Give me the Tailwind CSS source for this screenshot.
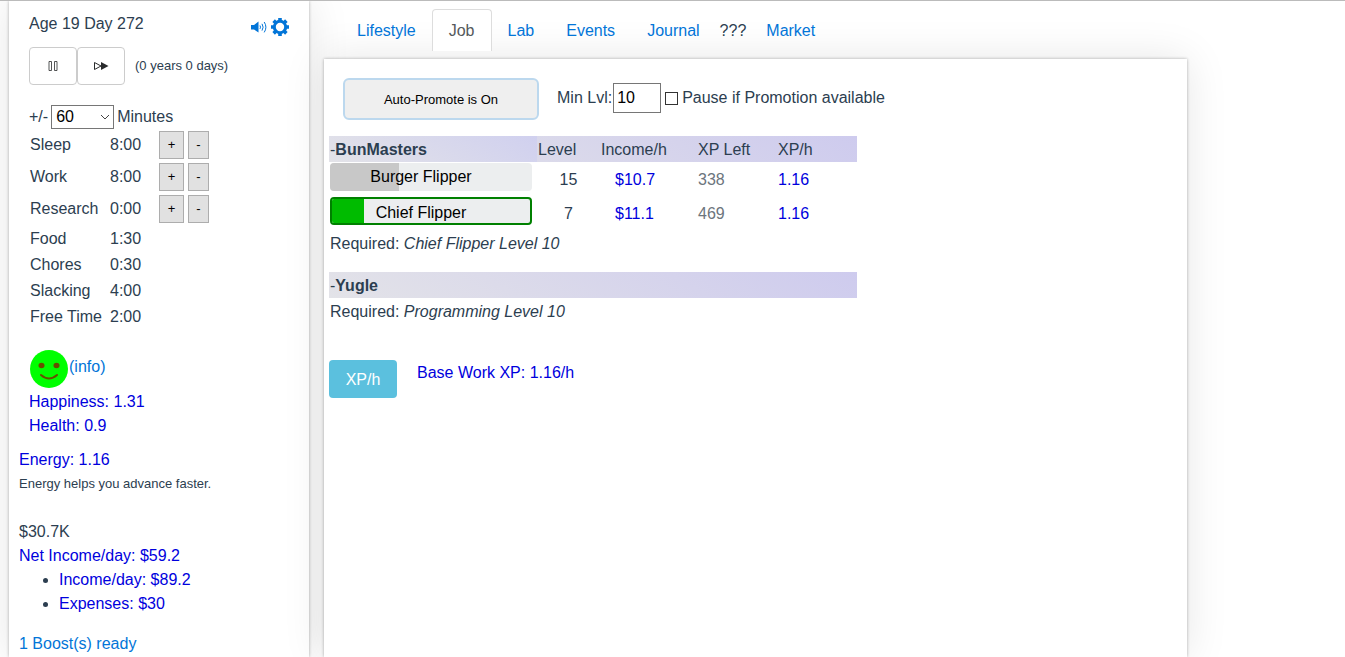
<!DOCTYPE html>
<html lang="en">
<head>
    <meta charset="UTF-8">
    <meta name="viewport" content="width=device-width, initial-scale=1.0">
    <title>Job</title>
    <script src="https://cdn.jsdelivr.net/npm/@tailwindcss/browser@4"></script>
</head>
<body class="bg-white font-['Liberation_Sans',Arial,sans-serif] text-base text-[#2c3e50]">
    <div class="flex min-h-screen overflow-hidden border-t border-[#bbbbbb]">
        <!-- Sidebar -->
        <aside class="ml-[9px] w-[300px] shrink-0 bg-white pt-[11px] shadow-[0_0_40px_rgba(0,0,0,0.1),0_0_3px_rgba(0,0,0,0.3)]">
            <div class="pl-5">
                <div class="flex justify-between pr-5">
                    <h1>Age 19 Day 272</h1>
                    <div class="flex items-center gap-1 pt-1.5">
                        <button type="button" aria-label="Sound">
                            <svg class="h-4 w-4" viewBox="0 0 16 16" fill="none" stroke="#0275d8">
                                <path d="M0 6h3L7.500 2.500v11L3 10.500H0z" fill="#0275d8" stroke="none" />
                                <path d="M9 6.500q1 1.700 0 3.400M11 4.800q2.200 3.400 0 6.800M13.200 3q3.400 5.200 0 10.400" stroke-width="1" />
                            </svg>
                        </button>
                        <button type="button" aria-label="Settings">
                            <svg class="h-[18px] w-[18px]" viewBox="0 0 18 18" fill="none" stroke="#0275d8">
                                <circle cx="9" cy="9" r="5.700" stroke-width="3" />
                                <path d="M9 0v3M9 15v3M0 9h3M15 9h3M2.640 2.640l2.100 2.100M13.260 13.260l2.100 2.100M2.640 15.360l2.100-2.100M13.260 4.740l2.100-2.100" stroke-width="3.600" />
                            </svg>
                        </button>
                    </div>
                </div>
                <div class="mt-[11px] flex items-center">
                    <button type="button" aria-label="Pause" class="flex h-[38px] w-12 items-center justify-center rounded border border-[#cccccc] bg-white">
                        <svg class="h-3 w-3" viewBox="0 0 12 12" fill="none" stroke="#292b2c">
                            <path d="M2 1.500h2.500v9H2zM7.500 1.500H10v9H7.500z" stroke-width="0.800" />
                        </svg>
                    </button>
                    <button type="button" aria-label="Fast forward" class="flex h-[38px] w-12 items-center justify-center rounded border border-[#cccccc] bg-white">
                        <svg class="h-3 w-4" viewBox="0 0 16 12" fill="none" stroke="#292b2c">
                            <path d="M1.500 2.500v7L8 6z" />
                            <path d="M8 2v8l7.500-4z" fill="#292b2c" stroke="none" />
                        </svg>
                    </button>
                    <span class="ml-[10px] text-[13px]">(0 years 0 days)</span>
                </div>
                <div class="mt-5 flex items-center gap-[3px]">
                    <label for="step">+/-</label>
                    <div class="relative">
                        <select id="step" class="block h-6 w-[63px] appearance-none border border-[#767676] bg-white pl-1 leading-5 text-black">
                            <option>60</option>
                        </select>
                        <svg class="pointer-events-none absolute top-2 right-1 h-2 w-[10px]" viewBox="0 0 10 8" fill="none" stroke="#444444">
                            <path d="M1 2l4 4 4-4" />
                        </svg>
                    </div>
                    <span>Minutes</span>
                </div>
                <table class="table-fixed border-collapse">
                    <colgroup>
                        <col class="w-20">
                        <col class="w-[49px]">
                        <col class="w-[60px]">
                    </colgroup>
                    <tbody>
                        <tr class="h-8">
                            <td class="pl-px">Sleep</td>
                            <td class="pl-px">8:00</td>
                            <td class="pl-px"><div class="flex gap-1">
                                <button type="button" class="h-7 w-[25px] border border-[#adadad] bg-[#e1e1e1] text-[13px] text-black">+</button>
                                <button type="button" class="h-7 w-[21px] border border-[#adadad] bg-[#e1e1e1] text-[13px] text-black">-</button>
                            </div></td>
                        </tr>
                        <tr class="h-8">
                            <td class="pl-px">Work</td>
                            <td class="pl-px">8:00</td>
                            <td class="pl-px"><div class="flex gap-1">
                                <button type="button" class="h-7 w-[25px] border border-[#adadad] bg-[#e1e1e1] text-[13px] text-black">+</button>
                                <button type="button" class="h-7 w-[21px] border border-[#adadad] bg-[#e1e1e1] text-[13px] text-black">-</button>
                            </div></td>
                        </tr>
                        <tr class="h-8">
                            <td class="pl-px">Research</td>
                            <td class="pl-px">0:00</td>
                            <td class="pl-px"><div class="flex gap-1">
                                <button type="button" class="h-7 w-[25px] border border-[#adadad] bg-[#e1e1e1] text-[13px] text-black">+</button>
                                <button type="button" class="h-7 w-[21px] border border-[#adadad] bg-[#e1e1e1] text-[13px] text-black">-</button>
                            </div></td>
                        </tr>
                        <tr class="h-[26px]"><td class="pt-0.5 pl-px">Food</td><td class="pt-0.5 pl-px">1:30</td><td></td></tr>
                        <tr class="h-[26px]"><td class="pt-0.5 pl-px">Chores</td><td class="pt-0.5 pl-px">0:30</td><td></td></tr>
                        <tr class="h-[26px]"><td class="pt-0.5 pl-px">Slacking</td><td class="pt-0.5 pl-px">4:00</td><td></td></tr>
                        <tr class="h-[26px]"><td class="pt-0.5 pl-px">Free Time</td><td class="pt-0.5 pl-px">2:00</td><td></td></tr>
                    </tbody>
                </table>
                <div class="mt-5 mb-px flex h-10 items-start">
                    <svg class="h-10 w-10" viewBox="0 0 40 40">
                        <circle cx="20" cy="20" r="19" fill="#00ff00" />
                        <ellipse cx="12.500" cy="16.500" rx="3" ry="2.700" fill="#665000" />
                        <ellipse cx="27.500" cy="16.500" rx="3" ry="2.700" fill="#665000" />
                        <path d="M12 26q8 7 16 0" fill="none" stroke="#665000" stroke-width="2" stroke-linecap="round" />
                    </svg>
                    <a href="#" class="leading-9 text-[#0275d8]">(info)</a>
                </div>
                <p class="text-[#0000dd]">Happiness: 1.31</p>
                <p class="text-[#0000dd]">Health: 0.9</p>
            </div>
            <div class="mt-[10px] pl-[10px]">
                <p class="text-[#0000dd]">Energy: 1.16</p>
                <p class="text-[13px] leading-6">Energy helps you advance faster.</p>
                <p class="mt-6">$30.7K</p>
                <p class="text-[#0000dd]">Net Income/day: $59.2</p>
                <ul class="list-disc pl-10">
                    <li><span class="text-[#0000dd]">Income/day: $89.2</span></li>
                    <li><span class="text-[#0000dd]">Expenses: $30</span></li>
                </ul>
                <a href="#" class="mt-4 block text-[#0275d8]">1 Boost(s) ready</a>
            </div>
        </aside>

        <!-- Main -->
        <main class="mr-[158px] ml-[15px] flex flex-1 flex-col pt-2">
            <nav class="relative z-10 flex pl-[17px]">
                <a href="#" class="border border-transparent px-[15px] pt-[9px] pb-[7px] text-[#0275d8]">Lifestyle</a>
                <a href="#" class="rounded-t border border-b-0 border-[#dddddd] bg-white px-4 pt-[9px] pb-2 text-[#55595c]">Job</a>
                <a href="#" class="border border-transparent px-[15px] pt-[9px] pb-[7px] text-[#0275d8]">Lab</a>
                <a href="#" class="border border-transparent px-[15px] pt-[9px] pb-[7px] text-[#0275d8]">Events</a>
                <a href="#" class="border border-transparent px-[15px] pt-[9px] pb-[7px] text-[#0275d8]">Journal</a>
                <span class="mx-1 border-y border-transparent pt-[9px] pb-[7px]">???</span>
                <a href="#" class="border border-transparent px-[15px] pt-[9px] pb-[7px] text-[#0275d8]">Market</a>
            </nav>
            <section class="mt-2 flex-1 bg-white px-[5px] pt-[19px] shadow-[0_0_40px_rgba(0,0,0,0.1),0_0_3px_rgba(0,0,0,0.3)]">
                <div class="flex items-center pl-[14px]">
                    <button type="button" class="h-[42px] w-[196px] rounded-md border-2 border-[#bcd8ee] bg-[#efefef] pt-0.5 text-[13px] text-black">Auto-Promote is On</button>
                    <div class="ml-[18px] flex items-center pb-0.5">
                        <label for="minLevel">Min Lvl:</label>
                        <input id="minLevel" type="text" value="10" class="ml-px h-[30px] w-12 border border-[#767676] pl-[3px] text-black">
                        <input id="pause" type="checkbox" class="ml-1 h-[13px] w-[13px] appearance-none border border-[#333333] bg-white">
                        <label for="pause" class="ml-1">Pause if Promotion available</label>
                    </div>
                </div>

                <table class="mt-4 w-[528px] table-fixed border-collapse text-left">
                    <colgroup>
                        <col class="w-[208px]">
                        <col class="w-[63px]">
                        <col class="w-[97px]">
                        <col class="w-20">
                        <col class="w-20">
                    </colgroup>
                    <thead>
                        <tr class="h-[26px] bg-linear-[30deg] from-[#e3e3e8] to-[#cecbee]">
                            <th class="bg-linear-[30deg] from-[#e3e3e8] to-[#d0d0ef] pt-0.5 pl-px font-normal">-<b>BunMasters</b></th>
                            <th class="pt-0.5 pl-px font-normal">Level</th>
                            <th class="pt-0.5 pl-px font-normal">Income/h</th>
                            <th class="pt-0.5 pl-px font-normal">XP Left</th>
                            <th class="pt-0.5 pl-px font-normal">XP/h</th>
                        </tr>
                    </thead>
                    <tbody>
                        <tr class="h-[34px]">
                            <td class="pt-px pl-px align-top">
                                <button type="button" class="flex h-7 w-[202px] overflow-hidden rounded bg-[#eceeef] text-black">
                                    <span class="grid h-full w-full grid-cols-1">
                                        <span class="col-start-1 row-start-1 h-7 bg-[#c8c8c8]" style="width: 34%"></span>
                                        <span class="col-start-1 row-start-1 pr-5 text-center leading-7">Burger Flipper</span>
                                    </span>
                                </button>
                            </td>
                            <td class="pt-0.5 text-center">15</td>
                            <td class="pt-0.5 pl-[15px] text-[#0000dd]">$10.7</td>
                            <td class="pt-0.5 pl-px text-[#6c757d]">338</td>
                            <td class="pt-0.5 pl-px text-[#0000dd]">1.16</td>
                        </tr>
                        <tr class="h-[34px]">
                            <td class="pt-px pl-px align-top">
                                <button type="button" class="flex h-7 w-[202px] overflow-hidden rounded border-2 border-[#008000] bg-[#eceeef] text-black">
                                    <span class="grid h-full w-full grid-cols-1">
                                        <span class="col-start-1 row-start-1 h-6 bg-[#00bb00]" style="width: 16%"></span>
                                        <span class="col-start-1 row-start-1 pr-5 text-center leading-7">Chief Flipper</span>
                                    </span>
                                </button>
                            </td>
                            <td class="pt-0.5 text-center">7</td>
                            <td class="pt-0.5 pl-[15px] text-[#0000dd]">$11.1</td>
                            <td class="pt-0.5 pl-px text-[#6c757d]">469</td>
                            <td class="pt-0.5 pl-px text-[#0000dd]">1.16</td>
                        </tr>
                        <tr class="h-[26px]">
                            <td colspan="5" class="pt-0.5 pl-px">Required: <i>Chief Flipper Level 10</i></td>
                        </tr>
                    </tbody>
                </table>

                <table class="mt-4 w-[528px] border-collapse text-left">
                    <thead>
                        <tr class="h-[26px] bg-linear-[30deg] from-[#e3e3e8] to-[#cecbee]">
                            <th class="pt-0.5 pl-px font-normal">-<b>Yugle</b></th>
                        </tr>
                    </thead>
                    <tbody>
                        <tr class="h-[26px]">
                            <td class="pt-0.5 pl-px">Required: <i>Programming Level 10</i></td>
                        </tr>
                    </tbody>
                </table>

                <div class="mt-9 flex items-start gap-5">
                    <button type="button" class="h-[38px] w-[68px] rounded bg-[#5bc0de] pt-0.5 text-white">XP/h</button>
                    <p class="pt-px text-[#0000dd]">Base Work XP: 1.16/h</p>
                </div>
            </section>
        </main>
    </div>
</body>
</html>
